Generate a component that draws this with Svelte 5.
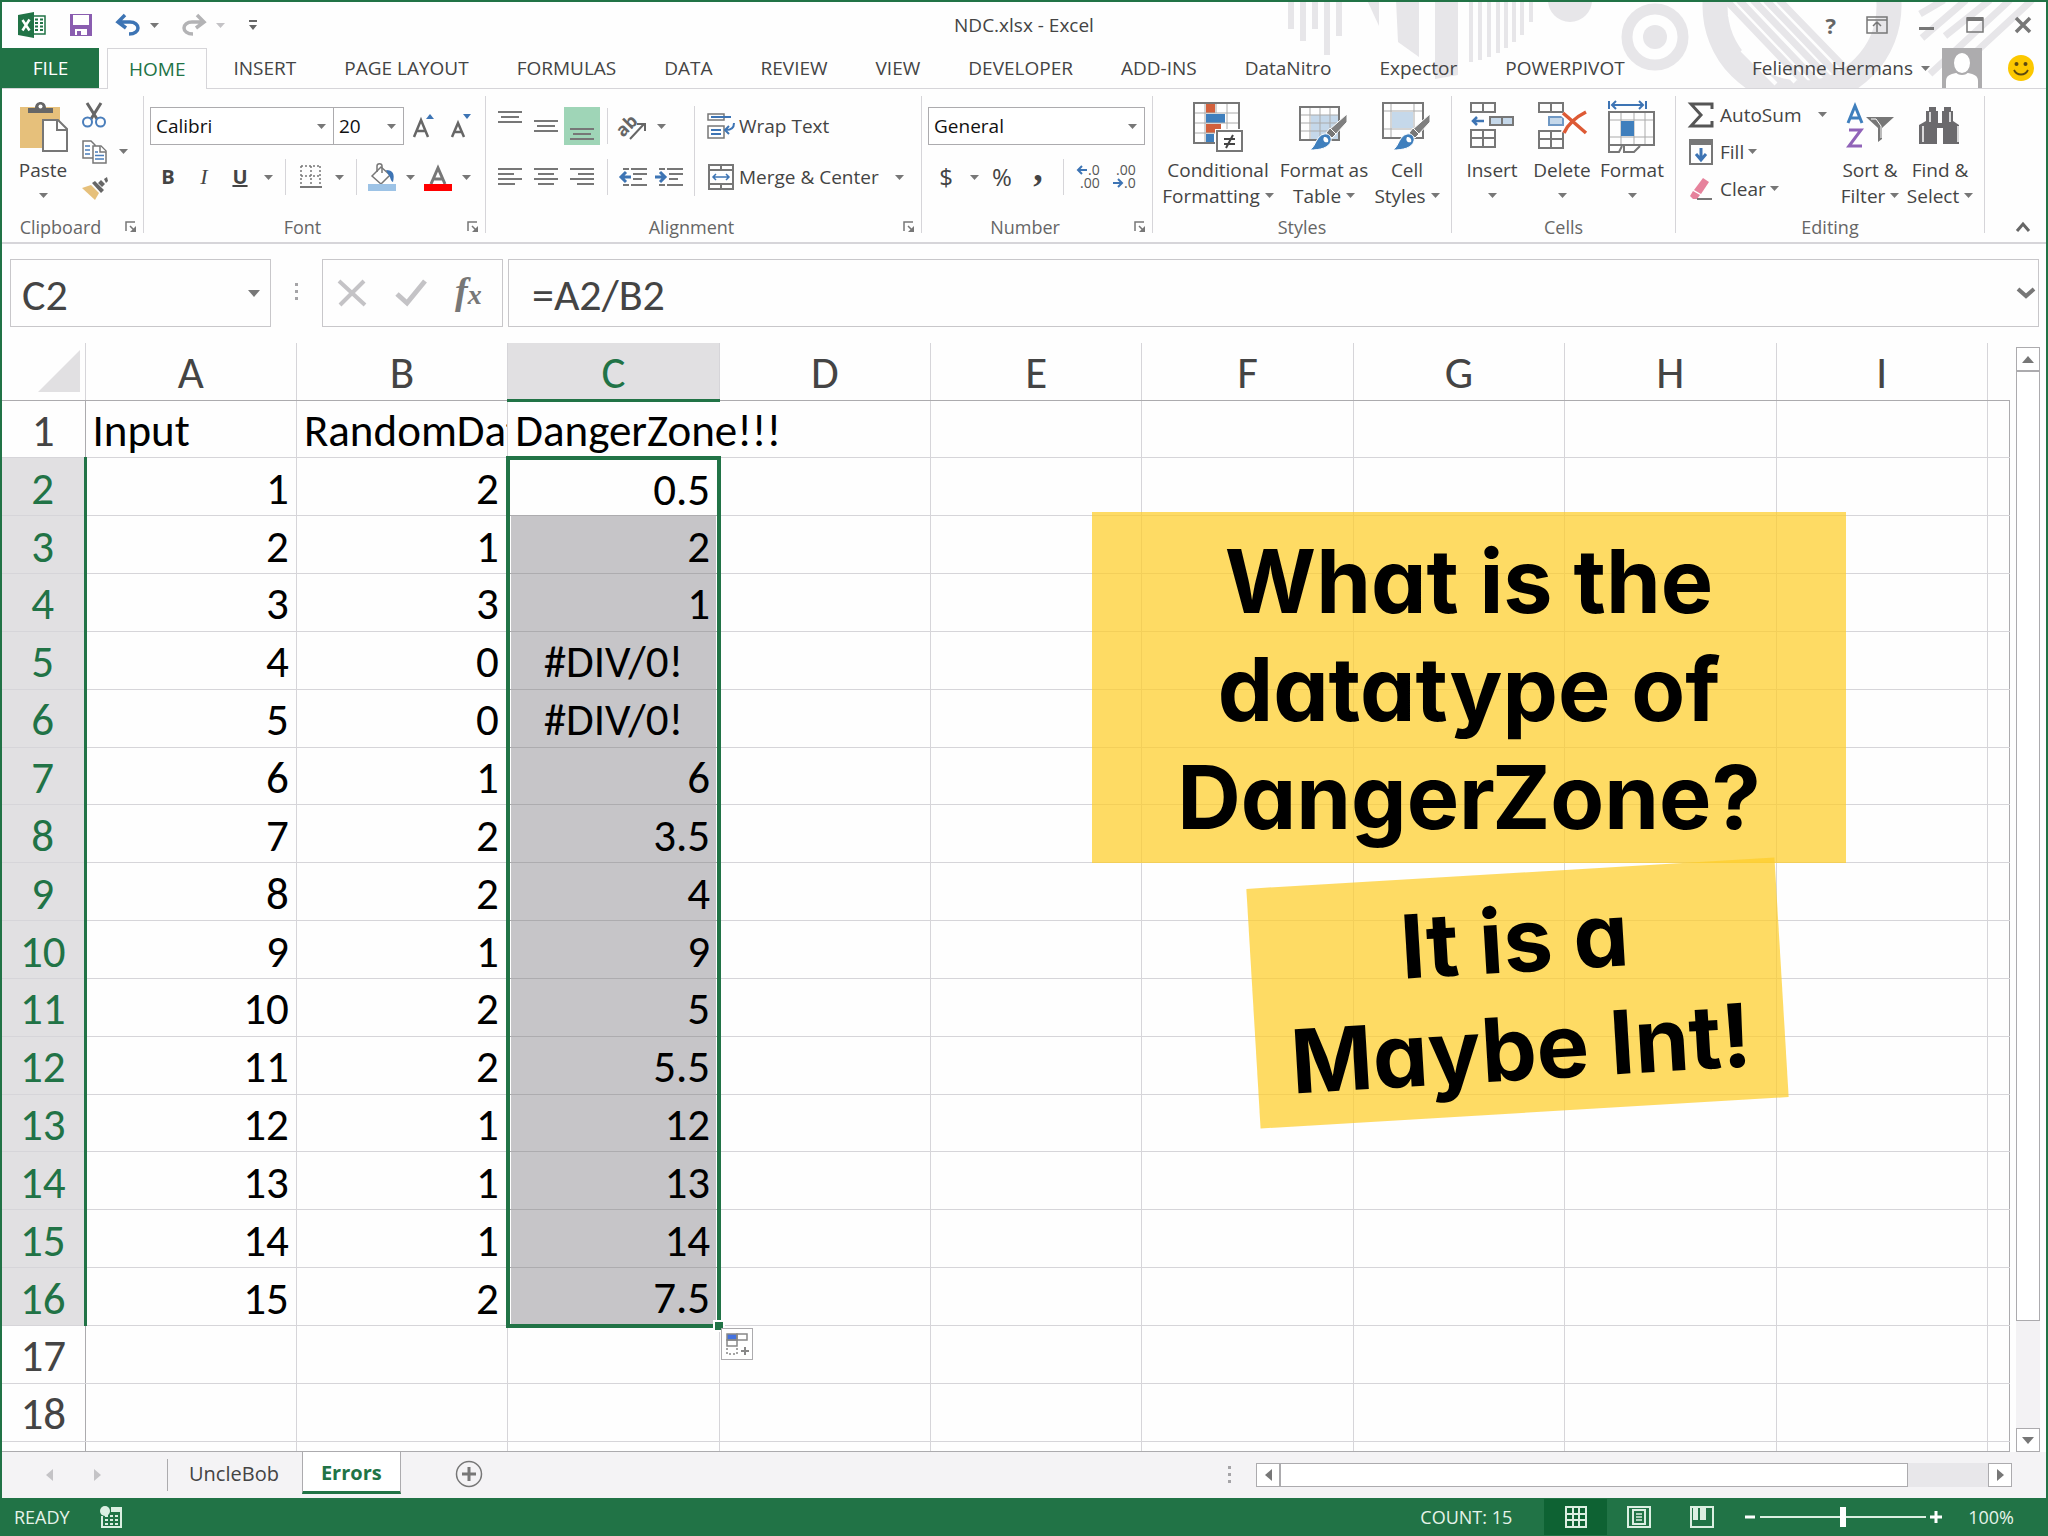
<script>
  const tabs = [
    'HOME', 'INSERT', 'PAGE LAYOUT', 'FORMULAS', 'DATA', 'REVIEW', 'VIEW',
    'DEVELOPER', 'ADD-INS', 'DataNitro', 'Expector', 'POWERPIVOT',
  ];
  const columns = ['A', 'B', 'C', 'D', 'E', 'F', 'G', 'H', 'I'];
  const data = [
    ['Input', 'RandomData', 'DangerZone!!!'],
    [1, 2, 0.5],
    [2, 1, 2],
    [3, 3, 1],
    [4, 0, '#DIV/0!'],
    [5, 0, '#DIV/0!'],
    [6, 1, 6],
    [7, 2, 3.5],
    [8, 2, 4],
    [9, 1, 9],
    [10, 2, 5],
    [11, 2, 5.5],
    [12, 1, 12],
    [13, 1, 13],
    [14, 1, 14],
    [15, 2, 7.5],
    [],
    [],
  ];
  const selection = { column: 2, first: 1, last: 15 };

  let activeTab = $state('HOME');
  let activeSheet = $state('Errors');
  let zoom = $state(50);
  let formula = $state('=A2/B2');

  function inRows(row) {
    return row >= selection.first && row <= selection.last;
  }

  function isSelected(row, column) {
    return column === selection.column && inRows(row);
  }
</script>

{#snippet arrow()}
  <svg class="arrow" width="9" height="5" viewBox="0 0 9 5" aria-hidden="true"><path d="M0 0h9L4.500 5z" fill="currentColor" /></svg>
{/snippet}

{#snippet launcher(label)}
  <button class="launcher" aria-label={label}>
    <svg width="12" height="12" viewBox="0 0 12 12" fill="none" stroke="#777">
      <path d="M1 10V1h9M5 5l5 5" stroke-width="1.500" />
      <path d="M11 5v6H5z" fill="#777" stroke="none" />
    </svg>
  </button>
{/snippet}

{#snippet lines(rows)}
  <svg width="24" height="20" viewBox="0 0 24 20" stroke="#777" stroke-width="2" aria-hidden="true">
    {#each rows as [x1, x2, y]}
      <path d="M{x1} {y}H{x2}" />
    {/each}
  </svg>
{/snippet}

{#snippet brush()}
  <path d="M48 13v8L36 34l-6-5z" fill="#7f7f7f" stroke="#fff" />
  <path d="M31 27l6 6-4 4-6-5z" fill="#777" stroke="#fff" />
  <path d="M25 33c5-1 8 3 7 7-2 7-11 9-21 9 6-4 6-14 14-16z" fill="#3f7fbd" stroke="#fff" />
  <path d="M25 36c3 0 5 2 4 5-3 1-6-1-4-5z" fill="#fff" />
{/snippet}

<div class="window">
  <header class="top">
    <svg class="backdrop" width="768" height="86" viewBox="1280 2 768 86" fill="none" aria-hidden="true">
      <g stroke="#e7e6e9" stroke-width="6">
        <path d="M1293 0v29M1305 0v41M1317 0v29M1329 0v55M1341 0v36" />
      </g>
      <path d="M1369 0h12v26zM1398 0h23v57l-21-15zM1437 0h23v75l-23 4z" fill="#e7e6e9" />
      <g stroke="#e7e6e9" stroke-width="4">
        <path d="M1473 0v62M1482 0v60M1491 0v57M1500 0v53M1508 0v48M1516 0v42M1524 0v35M1533 0v22" />
      </g>
      <circle cx="1572" cy="0" r="22" fill="#e7e6e9" />
      <circle cx="1657" cy="37" r="28" stroke="#e7e6e9" stroke-width="11" />
      <circle cx="1657" cy="37" r="12" fill="#e7e6e9" />
      <circle cx="1804" cy="6" r="87" stroke="#e7e6e9" stroke-width="25" />
      <path d="M1731 14l66 68M1744 50l34 34" stroke="#fefefe" stroke-width="4" />
      <g stroke="#e7e6e9" stroke-width="7">
        <path d="M1728 0l80 84M1741 0l78 82M1755 0l75 78M1768 0l71 74M1781 0l64 66" />
      </g>
      <g stroke="#e7e6e9" stroke-width="7">
        <path d="M1946 0l-24 14M1968 0l-44 38M1992 0l-45 36M2012 0l-80 74M2034 0l-80 74" />
      </g>
    </svg>

    <div class="titlebar">
      <div class="quick">
        <svg width="28" height="26" viewBox="0 0 28 26" aria-hidden="true">
          <path d="M15 4h12v18H15z" fill="#fff" stroke="#217346" stroke-width="1.500" />
          <path d="M17 7.500h3M22 7.500h3M17 11h3M22 11h3M17 14.500h3M22 14.500h3M17 18h3M22 18h3" stroke="#217346" stroke-width="2" />
          <path d="M0 3l16-3v26L0 23z" fill="#217346" />
          <path d="M4.500 8l7 10.500M11.500 7.500L4.500 18.500" stroke="#fff" stroke-width="2.500" />
        </svg>
        <button aria-label="Save">
          <svg width="24" height="24" viewBox="0 0 24 24">
            <path d="M1 1h22v22H1z" fill="#8a5db0" />
            <path d="M4 2h16v10H4zM6 16h12v6H6z" fill="#fff" />
            <path d="M8 18h4v4H8z" fill="#8a5db0" />
          </svg>
        </button>
        <button class="history" aria-label="Undo">
          <svg width="24" height="22" viewBox="0 0 24 22" fill="none" stroke="#3d74b4" stroke-width="3.500">
            <path d="M2 8h12c5 0 8 3 8 6s-3 6-9 6M9 1L2 8l8 6" />
          </svg>
          {@render arrow()}
        </button>
        <button class="history dim" aria-label="Redo">
          <svg width="24" height="22" viewBox="0 0 24 22" fill="none" stroke="#b3b3b5" stroke-width="3.500">
            <path d="M22 8H10c-5 0-8 3-8 6s3 6 9 6M15 1l7 7-8 6" />
          </svg>
          {@render arrow()}
        </button>
        <button aria-label="Customize Quick Access Toolbar">
          <svg width="10" height="12" viewBox="0 0 10 12" fill="#666"><path d="M1 1h8v2H1zM1 6h8l-4 5z" /></svg>
        </button>
      </div>
      <h1>NDC.xlsx - Excel</h1>
      <div class="controls">
        <button aria-label="Help"><b>?</b></button>
        <button aria-label="Ribbon Display Options">
          <svg width="22" height="18" viewBox="0 0 22 18" fill="none" stroke="#777" stroke-width="1.500"><path d="M1 1h20v16H1zM1 4h20M11 16V7M7 10l4-4 4 4" /></svg>
        </button>
        <button aria-label="Minimize">
          <svg width="18" height="18" viewBox="0 0 18 18"><path d="M1 11h15v3H1z" fill="#777" /></svg>
        </button>
        <button aria-label="Maximize">
          <svg width="18" height="18" viewBox="0 0 18 18"><path d="M1 2h16v14H1z" fill="none" stroke="#777" stroke-width="1.500" /><path d="M1 1h16v4H1z" fill="#777" /></svg>
        </button>
        <button aria-label="Close">
          <svg width="18" height="18" viewBox="0 0 18 18"><path d="M2 2l14 14M16 2L2 16" stroke="#777" stroke-width="3.500" /></svg>
        </button>
      </div>
    </div>

    <nav class="tabs">
      <button class="file">FILE</button>
      {#each tabs as tab}
        <button class="tab" class:active={tab === activeTab} onclick={() => (activeTab = tab)}>{tab}</button>
      {/each}
      <div class="account">
        <button class="user">Felienne Hermans {@render arrow()}</button>
        <svg width="40" height="40" viewBox="0 0 40 40" aria-hidden="true">
          <path d="M0 0h40v40H0z" fill="#adacae" />
          <path d="M4 40V33c0-5 4-7 10-8h12c6 1 10 3 10 8v7z" fill="#fff" />
          <ellipse cx="20" cy="15" rx="9" ry="11" fill="#fff" stroke="#adacae" stroke-width="2" />
        </svg>
        <svg width="26" height="26" viewBox="0 0 26 26" aria-hidden="true">
          <circle cx="13" cy="13" r="13" fill="#fcc800" />
          <circle cx="8.500" cy="9" r="2" fill="#5d4a10" />
          <circle cx="17.500" cy="9" r="2" fill="#5d4a10" />
          <path d="M6 15c3 6 11 6 14 0" fill="none" stroke="#5d4a10" stroke-width="1.800" />
        </svg>
      </div>
    </nav>
  </header>

  <div class="ribbon">
    <section class="group clipboard">
      <div class="tools">
        <button class="big">
          <svg width="50" height="52" viewBox="0 0 50 52" aria-hidden="true">
            <path d="M2 6h40v41H2z" fill="#e6c07b" />
            <path d="M10 12V7h7c0-8 11-8 11 0h7v5z" fill="#666" />
            <circle cx="22.500" cy="5.500" r="2" fill="#fff" />
            <path d="M25 19h15l9 9v22H25z" fill="#fff" stroke="#777" stroke-width="2" />
            <path d="M39 19v10h10" fill="none" stroke="#777" stroke-width="2" />
          </svg>
          <span>Paste</span>
          <span>{@render arrow()}</span>
        </button>
        <div class="stack">
          <button aria-label="Cut">
            <svg width="24" height="26" viewBox="0 0 24 26" fill="none">
              <path d="M5 1l10 16M19 1L9 17" stroke="#666" stroke-width="3" />
              <circle cx="5.500" cy="20" r="4.500" stroke="#4a7ebb" stroke-width="2" />
              <circle cx="18.500" cy="20" r="4.500" stroke="#4a7ebb" stroke-width="2" />
            </svg>
          </button>
          <button class="wide" aria-label="Copy">
            <svg width="26" height="24" viewBox="0 0 26 24" fill="#fff" stroke="#777" stroke-width="1.500">
              <path d="M1 1h8l4 4v13H1z" />
              <path d="M11 6h8l5 5v12H11z" />
              <path d="M18 6v6h6" />
              <path d="M3 6h5M3 10h5M3 14h5M13 12h3M13 15.500h9M13 19h9" stroke="#4a7ebb" />
            </svg>
            {@render arrow()}
          </button>
          <button aria-label="Format Painter">
            <svg width="26" height="24" viewBox="0 0 26 24">
              <path d="M0 11l9-3 8 8-4 7z" fill="#e6c07b" />
              <path d="M10 6l3-2 9 9-3 3zM16 6l3-3 4 4-3 3zM22 2l3-2 1 4-2 2z" fill="#666" />
            </svg>
          </button>
        </div>
      </div>
      <footer><span>Clipboard</span>{@render launcher('Clipboard settings')}</footer>
    </section>

    <section class="group font">
      <div class="tools rows">
        <div class="row">
          <label class="select face"><select aria-label="Font"><option>Calibri</option></select>{@render arrow()}</label>
          <label class="select size"><select aria-label="Font size"><option>20</option></select>{@render arrow()}</label>
          <button class="grow" aria-label="Increase Font Size">
            <svg width="26" height="24" viewBox="0 0 26 24"><path d="M2 23L9 6l7 17M4.500 17h9" fill="none" stroke="#666" stroke-width="2.500" /><path d="M14 5l4-5 4 5z" fill="#3d74b4" /></svg>
          </button>
          <button aria-label="Decrease Font Size">
            <svg width="24" height="24" viewBox="0 0 24 24"><path d="M2 23L8 9l6 14M4 18h8" fill="none" stroke="#666" stroke-width="2.500" /><path d="M13 0h8l-4 5z" fill="#3d74b4" /></svg>
          </button>
        </div>
        <div class="row">
          <button class="tool"><b>B</b></button>
          <button class="tool serif"><i>I</i></button>
          <button class="tool"><b><u>U</u></b></button>
          <button class="drop" aria-label="Underline options">{@render arrow()}</button>
          <span class="divider"></span>
          <button class="tool" aria-label="Borders">
            <svg width="24" height="24" viewBox="0 0 24 24" stroke="#777" fill="none">
              <path d="M2 1h20M2 11h20M2 1v20M12 1v20M21 1v20" stroke-width="1.500" stroke-dasharray="2 2" />
              <path d="M1 22h22" stroke-width="2" />
            </svg>
          </button>
          <button class="drop" aria-label="Border options">{@render arrow()}</button>
          <span class="divider"></span>
          <button class="tool" aria-label="Fill Color">
            <svg width="28" height="28" viewBox="0 0 28 28">
              <path d="M4 13L13 4l9 8-9 9z" fill="#fff" stroke="#777" stroke-width="1.500" />
              <path d="M9 9V3c0-3 5-3 5 0v7" fill="none" stroke="#777" stroke-width="1.500" />
              <path d="M18 7c7 0 9 4 7 12-3-1-2-5-5-8z" fill="#3d74b4" />
              <path d="M0 21h28v7H0z" fill="#9dc3e6" />
            </svg>
          </button>
          <button class="drop" aria-label="Fill color options">{@render arrow()}</button>
          <button class="tool" aria-label="Font Color">
            <svg width="28" height="28" viewBox="0 0 28 28"><path d="M7 21l7-16 7 16M9 16h10" fill="none" stroke="#777" stroke-width="3" /><path d="M0 21h28v7H0z" fill="#f00" /></svg>
          </button>
          <button class="drop" aria-label="Font color options">{@render arrow()}</button>
        </div>
      </div>
      <footer><span>Font</span>{@render launcher('Font settings')}</footer>
    </section>

    <section class="group alignment">
      <div class="tools">
        <div class="rows">
          <div class="row">
            <button class="tool high" aria-label="Top Align">{@render lines([[0, 24, 3], [3, 21, 8], [0, 24, 13]])}</button>
            <button class="tool" aria-label="Middle Align">{@render lines([[0, 24, 5], [3, 21, 10], [0, 24, 15]])}</button>
            <button class="tool low pressed" aria-label="Bottom Align">{@render lines([[0, 24, 6], [3, 21, 11], [0, 24, 16]])}</button>
            <span class="divider"></span>
            <button class="tool" aria-label="Orientation">
              <svg width="28" height="28" viewBox="0 0 28 28">
                <text x="-3" y="19" transform="rotate(-45 9 14)" font-family="Open Sans, sans-serif" font-size="18" font-weight="700" fill="#666">ab</text>
                <path d="M11 27L25 12M18 12h8v7" fill="none" stroke="#666" stroke-width="2" />
              </svg>
            </button>
            <button class="drop" aria-label="Orientation options">{@render arrow()}</button>
          </div>
          <div class="row">
            <button class="tool" aria-label="Align Left">{@render lines([[0, 24, 2], [0, 16, 7], [0, 24, 12], [0, 17, 17]])}</button>
            <button class="tool" aria-label="Center">{@render lines([[0, 24, 2], [4, 20, 7], [0, 24, 12], [4, 20, 17]])}</button>
            <button class="tool" aria-label="Align Right">{@render lines([[0, 24, 2], [8, 24, 7], [0, 24, 12], [7, 24, 17]])}</button>
            <span class="divider"></span>
            <button class="tool" aria-label="Decrease Indent">
              <svg width="28" height="20" viewBox="0 0 28 20" fill="none" stroke="#777" stroke-width="2">
                <path d="M4 2h6M12 2h16M14 7h14M14 12h9M4 18h6M12 18h16" />
                <path d="M2 10h10M7 5l-5 5 5 5" stroke="#3d74b4" stroke-width="3" />
              </svg>
            </button>
            <button class="tool" aria-label="Increase Indent">
              <svg width="28" height="20" viewBox="0 0 28 20" fill="none" stroke="#777" stroke-width="2">
                <path d="M4 2h6M12 2h16M14 7h14M14 12h9M4 18h6M12 18h16" />
                <path d="M0 10h10M5 5l5 5-5 5" stroke="#3d74b4" stroke-width="3" />
              </svg>
            </button>
          </div>
        </div>
        <span class="divider tall"></span>
        <div class="rows">
          <button class="text">
            <svg width="28" height="28" viewBox="0 0 28 28" fill="none" stroke="#777" stroke-width="1.500" aria-hidden="true">
              <path d="M1 2h16v6H1zM1 14h16v12H1z" />
              <path d="M4 5h20M4 18h10M4 22h10M27 11c0 5-3 7-8 7M22 14l-4 4 4 4" stroke="#3d74b4" stroke-width="2" />
            </svg>
            Wrap Text
          </button>
          <button class="text">
            <svg width="28" height="28" viewBox="0 0 28 28" fill="none" stroke="#777" stroke-width="2" aria-hidden="true">
              <path d="M2 2h24v24H2zM2 7h24M2 21h24M14 2v5M14 21v5" />
              <path d="M6 14h16M9 11l-3 3 3 3M19 11l3 3-3 3" stroke="#3d74b4" stroke-width="1.500" />
            </svg>
            Merge &amp; Center <span class="far">{@render arrow()}</span>
          </button>
        </div>
      </div>
      <footer><span>Alignment</span>{@render launcher('Alignment settings')}</footer>
    </section>

    <section class="group number">
      <div class="tools rows">
        <div class="row">
          <label class="select format"><select aria-label="Number format"><option>General</option></select>{@render arrow()}</label>
        </div>
        <div class="row">
          <button class="tool symbol">$</button>
          <button class="drop" aria-label="Accounting options">{@render arrow()}</button>
          <button class="tool symbol">%</button>
          <button class="tool comma" aria-label="Comma Style"><b>,</b></button>
          <span class="divider"></span>
          <button class="tool" aria-label="Increase Decimal">
            <svg width="26" height="26" viewBox="0 0 26 26" font-family="Open Sans, sans-serif" font-size="14" fill="#555">
              <text x="12" y="11">.0</text><text x="4" y="24">.00</text>
              <path d="M2 6h9M6 2L2 6l4 4" fill="none" stroke="#3d74b4" stroke-width="2" />
            </svg>
          </button>
          <button class="tool" aria-label="Decrease Decimal">
            <svg width="26" height="26" viewBox="0 0 26 26" font-family="Open Sans, sans-serif" font-size="14" fill="#555">
              <text x="4" y="11">.00</text><text x="12" y="24">.0</text>
              <path d="M1 19h9M6 15l4 4-4 4" fill="none" stroke="#3d74b4" stroke-width="2" />
            </svg>
          </button>
        </div>
      </div>
      <footer><span>Number</span>{@render launcher('Number settings')}</footer>
    </section>

    <section class="group styles">
      <div class="tools">
        <button class="big">
          <svg width="50" height="52" viewBox="0 0 50 52" fill="none" aria-hidden="true">
            <path d="M1 2h45v40H1z" fill="#fff" />
            <path d="M13 2h9v10h-9zM13 23h15v9H13z" fill="#d2603c" />
            <path d="M13 13h19v9H13zM13 33h8v9h-8z" fill="#3f7fbd" />
            <path d="M12 2v40M23 2v10M34 2v40M1 12h45M1 22h45M1 32h45" stroke="#aaa" />
            <path d="M1 2h45v40H1z" stroke="#777" stroke-width="2" />
            <path d="M24 30h25v20H24z" fill="#fff" stroke="#fff" stroke-width="4" />
            <path d="M24 30h25v20H24z" fill="#fff" stroke="#777" stroke-width="2" />
            <path d="M31 38h11M31 43h11M40 34l-7 13" stroke="#444" stroke-width="2" />
          </svg>
          <span>Conditional</span>
          <span>Formatting {@render arrow()}</span>
        </button>
        <button class="big">
          <svg width="50" height="52" viewBox="0 0 50 52" fill="none" aria-hidden="true">
            <path d="M12 14h28v25H12z" fill="#c5d8ea" />
            <path d="M11 6v33M21 6v33M31 6v33M1 14h39M1 22h39M1 30h39" stroke="#aaa" />
            <path d="M1 6h39v33H1z" stroke="#777" stroke-width="2" />
            {@render brush()}
          </svg>
          <span>Format as</span>
          <span>Table {@render arrow()}</span>
        </button>
        <button class="big">
          <svg width="50" height="52" viewBox="0 0 50 52" fill="none" aria-hidden="true">
            <path d="M10 11h21v16H10z" fill="#c5d8ea" />
            <path d="M9 2v35M32 2v35M1 10h40M1 28h40" stroke="#aaa" />
            <path d="M1 2h40v35H1z" stroke="#777" stroke-width="2" />
            {@render brush()}
          </svg>
          <span>Cell</span>
          <span>Styles {@render arrow()}</span>
        </button>
      </div>
      <footer><span>Styles</span></footer>
    </section>

    <section class="group cells">
      <div class="tools">
        <button class="big">
          <svg width="50" height="52" viewBox="0 0 50 52" fill="none" stroke="#777" stroke-width="2" aria-hidden="true">
            <path d="M4 2h24v9H4zM16 2v9M4 29h24v17H4zM16 29v17M4 37h24" />
            <path d="M23 16h23v8H23zM35 16v8" fill="#c5d8ea" />
            <path d="M6 20h11M10 16l-4 4 4 4" stroke="#3d74b4" stroke-width="2.500" />
          </svg>
          <span>Insert</span>
          <span>{@render arrow()}</span>
        </button>
        <button class="big">
          <svg width="50" height="52" viewBox="0 0 50 52" fill="none" stroke="#777" stroke-width="2" aria-hidden="true">
            <path d="M2 2h24v9H2zM14 2v9M2 30h24v17H2zM14 30v17M2 38h24" />
            <path d="M12 16h14v8H12z" fill="#c5d8ea" stroke="#6f98c4" />
            <path d="M26 12l23 20M49 11C39 16 31 23 27 32" stroke="#fff" stroke-width="7" />
            <path d="M26 12l23 20M49 11C39 16 31 23 27 32" stroke="#dd5a35" stroke-width="3.500" />
          </svg>
          <span>Delete</span>
          <span>{@render arrow()}</span>
        </button>
        <button class="big">
          <svg width="50" height="52" viewBox="0 0 50 52" fill="none" aria-hidden="true">
            <path d="M2 0v8M39 0v8M5 4h31M9 0L5 4l4 4M32 0l4 4-4 4" stroke="#3d74b4" stroke-width="2" />
            <path d="M14 11v34M27 11v34M38 11v34M2 19h45M2 36h45" stroke="#aaa" />
            <path d="M14 20h13v15H14z" fill="#3f7fbd" />
            <path d="M2 11h45v33H2zM2 44v7h10l3-6M17 45v6h10l6-6" stroke="#777" stroke-width="2" />
          </svg>
          <span>Format</span>
          <span>{@render arrow()}</span>
        </button>
      </div>
      <footer><span>Cells</span></footer>
    </section>

    <section class="group editing">
      <div class="tools">
        <div class="stack">
          <button class="text">
            <svg width="26" height="26" viewBox="0 0 26 26" aria-hidden="true"><path d="M24 7V2H3l10 11L3 24h21v-5" fill="none" stroke="#555" stroke-width="3" /></svg>
            AutoSum <span class="far">{@render arrow()}</span>
          </button>
          <button class="text">
            <svg width="26" height="26" viewBox="0 0 26 26" fill="none" aria-hidden="true">
              <path d="M2 1h22v24H2z" stroke="#777" stroke-width="2" />
              <path d="M2 1h22v5H2z" fill="#777" />
              <path d="M13 9v12M8 15l5 6 5-6" stroke="#3d74b4" stroke-width="3" />
            </svg>
            Fill {@render arrow()}
          </button>
          <button class="text">
            <svg width="26" height="26" viewBox="0 0 26 26" aria-hidden="true">
              <path d="M15 2l6 4-8 12-7-4z" fill="#e6829c" />
              <path d="M5 15l7 4-3 4H5l-3-3z" fill="#e6829c" />
              <path d="M9 23h15" stroke="#777" stroke-width="2" />
            </svg>
            Clear {@render arrow()}
          </button>
        </div>
        <button class="big">
          <svg width="50" height="52" viewBox="0 0 50 52" fill="none" aria-hidden="true">
            <path d="M3 22L10 5l7 17M5 17h10" stroke="#3f7fbd" stroke-width="3" />
            <path d="M4 29h12L4 45h13" stroke="#9063b8" stroke-width="3" />
            <path d="M21 16h28L37 27v11l-4 3V27z" fill="#777" />
            <path d="M26 18h5l5 7v12" stroke="#fff" />
          </svg>
          <span>Sort &amp;</span>
          <span>Filter {@render arrow()}</span>
        </button>
        <button class="big">
          <svg width="50" height="52" viewBox="0 0 50 52" fill="#6b6a6d" aria-hidden="true">
            <path d="M14 6h7v4h2v12h4V10h2V6h7v4h2v10l6 4v19H28V27h-6v16H4V24l7-4V10h3z" />
            <path d="M15 11v10M8 25v16M35 11v10M43 25v16" stroke="#fff" stroke-width="1.500" />
            <path d="M23 20h4" stroke="#fff" />
          </svg>
          <span>Find &amp;</span>
          <span>Select {@render arrow()}</span>
        </button>
      </div>
      <footer><span>Editing</span></footer>
    </section>

    <button class="collapse" aria-label="Collapse the Ribbon">
      <svg width="16" height="12" viewBox="0 0 16 12"><path d="M2 10l6-7 6 7" fill="none" stroke="#666" stroke-width="3" /></svg>
    </button>
  </div>

  <div class="formula-bar">
    <div class="box name">
      <input value="C2" aria-label="Name Box" />
      <button aria-label="Name list"><svg width="12" height="7" viewBox="0 0 12 7"><path d="M0 0h12L6 7z" fill="#777" /></svg></button>
    </div>
    <span class="dots"></span>
    <div class="box entry">
      <button aria-label="Cancel"><svg width="30" height="28" viewBox="0 0 30 28"><path d="M2 2l26 24M27 2L3 26" stroke="#c4c3c6" stroke-width="4" /></svg></button>
      <button aria-label="Enter"><svg width="32" height="28" viewBox="0 0 32 28"><path d="M2 15l10 9L30 2" fill="none" stroke="#c4c3c6" stroke-width="5" /></svg></button>
      <button class="fx" aria-label="Insert Function"><i>f<small>x</small></i></button>
    </div>
    <div class="box formula">
      <input bind:value={formula} aria-label="Formula Bar" />
      <button aria-label="Expand Formula Bar"><svg width="20" height="14" viewBox="0 0 20 14"><path d="M2 3l8 7 8-7" fill="none" stroke="#777" stroke-width="4" /></svg></button>
    </div>
  </div>

  <main class="workspace">
    <div class="sheet">
      <table>
        <colgroup>
          <col class="index" />
          {#each columns as column (column)}<col />{/each}
          <col class="rest" />
        </colgroup>
        <thead>
          <tr>
            <th class="corner"><svg width="42" height="42" viewBox="0 0 42 42" aria-hidden="true"><path d="M42 0v42H0z" fill="#e1e0e2" /></svg></th>
            {#each columns as column, c}
              <th scope="col" class:picked={c === selection.column}>{column}</th>
            {/each}
            <th></th>
          </tr>
        </thead>
        <tbody>
          {#each data as row, r}
            <tr>
              <th scope="row" class:picked={inRows(r)}>{r + 1}</th>
              {#each columns as column, c}
                <td
                  class:value={typeof row[c] === 'number'}
                  class:error={typeof row[c] === 'string' && row[c].startsWith('#')}
                  class:spill={r === 0 && c === selection.column}
                  class:selected={isSelected(r, c)}
                  class:first={isSelected(r, c) && r === selection.first}
                  class:last={isSelected(r, c) && r === selection.last}
                >
                  {row[c] ?? ''}
                  {#if isSelected(r, c) && r === selection.last}
                    <span class="handle"></span>
                    <button class="autofill" aria-label="Auto Fill Options">
                      <svg width="26" height="26" viewBox="0 0 26 26" fill="none" stroke="#888" stroke-width="1.500">
                        <path d="M3 3h10v6H3z" fill="#4472e0" />
                        <path d="M13 3h10v6H13zM3 9h10v6H3z" />
                        <path d="M3 17v6h10v-6" stroke-dasharray="2 2" />
                        <path d="M17 20h8M21 16v8" stroke-width="2" />
                      </svg>
                    </button>
                  {/if}
                </td>
              {/each}
              <td></td>
            </tr>
          {/each}
          <tr class="cut">
            <th></th>
            {#each columns as column (column)}<td></td>{/each}
            <td></td>
          </tr>
        </tbody>
      </table>

      <div class="note question">What is the<br />datatype of<br />DangerZone?</div>
      <div class="note answer">It is a<br />Maybe Int!</div>
    </div>

    <div class="vscroll">
      <button aria-label="Scroll up"><svg width="12" height="7" viewBox="0 0 12 7"><path d="M0 7h12L6 0z" fill="#777" /></svg></button>
      <div class="thumb"></div>
      <button class="end" aria-label="Scroll down"><svg width="12" height="7" viewBox="0 0 12 7"><path d="M0 0h12L6 7z" fill="#777" /></svg></button>
    </div>
  </main>

  <div class="sheets">
    <div class="pager">
      <button aria-label="Previous sheet"><svg width="7" height="12" viewBox="0 0 7 12"><path d="M7 0v12L0 6z" fill="#c4c3c6" /></svg></button>
      <button aria-label="Next sheet"><svg width="7" height="12" viewBox="0 0 7 12"><path d="M0 0v12l7-6z" fill="#c4c3c6" /></svg></button>
    </div>
    {#each ['UncleBob', 'Errors'] as name}
      <button class="sheet-tab" class:active={name === activeSheet} onclick={() => (activeSheet = name)}>{name}</button>
    {/each}
    <button class="add" aria-label="New sheet">
      <svg width="28" height="28" viewBox="0 0 28 28" fill="none" stroke="#777"><circle cx="14" cy="14" r="12.500" stroke-width="1.500" /><path d="M7 14h14M14 7v14" stroke-width="3" /></svg>
    </button>
    <span class="dots"></span>
    <div class="hscroll">
      <button aria-label="Scroll left"><svg width="7" height="12" viewBox="0 0 7 12"><path d="M7 0v12L0 6z" fill="#777" /></svg></button>
      <div class="thumb"></div>
      <button class="end" aria-label="Scroll right"><svg width="7" height="12" viewBox="0 0 7 12"><path d="M0 0v12l7-6z" fill="#777" /></svg></button>
    </div>
  </div>

  <footer class="status">
    <span>READY</span>
    <svg class="macro" width="22" height="22" viewBox="0 0 22 22" fill="none" stroke="#dcefe2" aria-hidden="true">
      <path d="M2 10v11h19V2H11" stroke-width="2" />
      <path d="M11 3h11v3H11z" fill="#dcefe2" stroke="none" />
      <path d="M5 10h3M10 10h3M15 10h3M5 14h3M10 14h3M15 14h3M5 18h3M10 18h3M15 18h3" stroke-width="2" />
      <circle cx="5" cy="5" r="5" fill="#dcefe2" stroke="none" />
    </svg>
    <span class="count">COUNT: 15</span>
    <div class="views">
      <button class="on" aria-label="Normal">
        <svg width="24" height="24" viewBox="0 0 24 24" fill="none" stroke="#dcefe2" stroke-width="2"><path d="M2 2h20v20H2zM2 9h20M2 15h20M9 2v20M15 2v20" /></svg>
      </button>
      <button aria-label="Page Layout">
        <svg width="24" height="24" viewBox="0 0 24 24" fill="none" stroke="#dcefe2" stroke-width="2"><path d="M1 2h22v20H1zM6 5h12v14H6z" /><path d="M9 9h6M9 12h6M9 15h6" stroke-width="1.500" /></svg>
      </button>
      <button aria-label="Page Break Preview">
        <svg width="24" height="24" viewBox="0 0 24 24" fill="none" stroke="#dcefe2" stroke-width="2"><path d="M1 2h22v20H1z" /><path d="M3 3h5v12H3zM10 3h6v12h-6z" fill="#dcefe2" stroke="none" /></svg>
      </button>
    </div>
    <div class="zoom">
      <button aria-label="Zoom out"><svg width="14" height="14" viewBox="0 0 14 14"><path d="M2 7h10" stroke="#fff" stroke-width="3" /></svg></button>
      <input type="range" min="0" max="100" bind:value={zoom} aria-label="Zoom" />
      <button aria-label="Zoom in"><svg width="14" height="14" viewBox="0 0 14 14"><path d="M1 7h12M7 1v12" stroke="#fff" stroke-width="3" /></svg></button>
      <span>100%</span>
    </div>
  </footer>
</div>

<style>
  :global(body) {
    margin: 0;
  }

  .window {
    --green: #217346;
    --line: #d6d5d9;
    --edge: #acabae;
    --shade: #e1e0e2;
    box-sizing: border-box;
    display: flex;
    flex-direction: column;
    height: 100vh;
    border: solid var(--green);
    border-width: 2px 2px 0;
    background: #fefefe;
    color: #444;
    font: 19px/26px 'Segoe UI', 'Open Sans', sans-serif;
    overflow: hidden;
  }

  .window *,
  .window *::before {
    box-sizing: border-box;
  }

  button,
  input,
  select {
    margin: 0;
    padding: 0;
    border: 0;
    background: none;
    color: inherit;
    font: inherit;
  }

  button {
    display: flex;
    align-items: center;
    justify-content: center;
    white-space: nowrap;
  }

  svg {
    flex: none;
    display: block;
  }

  button svg {
    overflow: visible;
  }

  .arrow {
    display: inline-block;
    color: #777;
    vertical-align: middle;
  }

  /* title and tabs */

  .top {
    position: relative;
  }

  .backdrop {
    position: absolute;
    top: 0;
    right: 0;
  }

  .titlebar {
    position: relative;
    display: grid;
    grid-template-columns: 1fr auto 1fr;
    align-items: center;
    height: 46px;
    padding: 0 14px;
  }

  .titlebar h1 {
    margin: 0;
    font-size: 19px;
    font-weight: 400;
  }

  .quick {
    display: flex;
    align-items: center;
    gap: 23px;
    padding-left: 2px;
  }

  .history {
    gap: 10px;
  }

  .dim .arrow {
    color: #c4c3c6;
  }

  .controls {
    display: flex;
    justify-content: flex-end;
    gap: 30px;
    color: #666;
    font-size: 22px;
  }

  .tabs {
    position: relative;
    display: flex;
    height: 41px;
    border-bottom: 1px solid var(--line);
  }

  .file {
    width: 97px;
    margin-right: 8px;
    background: var(--green);
    color: #fff;
  }

  .tab {
    padding: 0 24px;
  }

  .tab.active {
    height: 41px;
    margin-right: 2px;
    padding: 0 21px;
    border: solid var(--line);
    border-width: 1px 1px 0;
    background: #fefefe;
    color: var(--green);
  }

  .account {
    display: flex;
    flex: 1;
    align-items: center;
    justify-content: flex-end;
    padding-right: 12px;
  }

  .user {
    gap: 8px;
    margin-right: 12px;
  }

  .account svg + svg {
    margin-left: 26px;
  }

  /* ribbon */

  .ribbon {
    display: flex;
    padding: 7px 0 9px;
    border-bottom: 2px solid var(--line);
  }

  .group {
    display: flex;
    flex: none;
    flex-direction: column;
    height: 137px;
    border-right: 1px solid var(--line);
  }

  .clipboard { width: 142px; }
  .font { width: 342px; }
  .alignment { width: 436px; }
  .number { width: 231px; }
  .styles { width: 299px; }
  .cells { width: 224px; }
  .editing { width: 309px; }

  .tools {
    display: flex;
    flex: 1;
    padding: 0 6px;
  }

  .group footer {
    display: flex;
    align-items: center;
    height: 12px;
    color: #666;
    font-size: 18px;
    line-height: 12px;
  }

  .group footer span {
    flex: 1;
    text-align: center;
  }

  .launcher {
    width: 24px;
  }

  .rows {
    display: flex;
    flex-direction: column;
    gap: 13px;
    padding-top: 11px;
  }

  .row {
    display: flex;
    align-items: center;
    height: 38px;
  }

  .tool {
    flex: none;
    width: 36px;
    height: 38px;
  }

  .tool b {
    font-size: 20px;
  }

  .serif {
    font: 22px 'Liberation Serif', serif;
  }

  .high {
    align-items: flex-start;
    padding-top: 2px;
  }

  .low {
    align-items: flex-end;
    padding-bottom: 2px;
  }

  .pressed {
    background: #9fd5b7;
  }

  .drop {
    width: 20px;
    height: 38px;
  }

  .divider {
    width: 1px;
    height: 36px;
    margin: 0 7px;
    background: var(--line);
  }

  .divider.tall {
    height: 90px;
    margin: 10px 12px 0 7px;
  }

  .select {
    display: grid;
    grid-template-columns: 1fr 24px;
    align-items: center;
    height: 38px;
    border: 1px solid var(--edge);
    background: #fff;
    color: #111;
  }

  .select select {
    grid-area: 1 / 1 / 2 / 3;
    height: 36px;
    padding-left: 5px;
    appearance: none;
  }

  .select .arrow {
    grid-area: 1 / 2;
    justify-self: center;
    pointer-events: none;
  }

  .face { width: 184px; }
  .size { width: 71px; margin-left: -1px; }
  .format { width: 217px; }

  .grow {
    margin: 0 12px 0 8px;
  }

  .text {
    justify-content: flex-start;
    gap: 4px;
    height: 38px;
  }

  .far {
    display: flex;
    margin-left: 12px;
  }

  .symbol {
    font-size: 24px;
  }

  .comma {
    align-items: flex-start;
    font-family: 'Liberation Serif', serif;
  }

  .comma b {
    font-size: 38px;
    line-height: 20px;
  }

  .big {
    flex-direction: column;
    justify-content: flex-start;
    width: 70px;
    padding-top: 5px;
  }

  .big svg:first-child {
    margin-bottom: 4px;
  }

  .big span {
    height: 26px;
  }

  .styles .big { width: 72px; }
  .styles .big:nth-child(1) { width: 118px; }
  .styles .big:nth-child(2) { width: 94px; }

  .clipboard .tools {
    gap: 4px;
    padding: 0 2px 0 6px;
  }

  .clipboard .stack button {
    justify-content: flex-start;
    height: 37px;
  }

  .clipboard .wide {
    gap: 11px;
  }

  .cells .tools {
    padding-left: 5px;
  }

  .editing .tools {
    padding-left: 12px;
  }

  .editing .stack {
    width: 147px;
  }

  .stack .text {
    height: 37px;
  }

  .stack .text svg:first-child {
    margin-right: 2px;
  }

  .collapse {
    flex: 1;
    align-items: flex-end;
    padding-left: 14px;
  }

  /* formula bar */

  .formula-bar {
    display: flex;
    padding: 15px 7px 0 8px;
    font: 44px/44px Calibri, Carlito, Lato, sans-serif;
  }

  .box {
    display: flex;
    height: 68px;
    border: 1px solid #c8c7ca;
  }

  .box input {
    flex: 1;
    min-width: 0;
    padding-top: 4px;
    outline: 0;
  }

  .name {
    width: 261px;
    padding: 0 10px 0 11px;
  }

  .dots {
    width: 3px;
    height: 18px;
    margin: 24px;
    background: repeating-linear-gradient(#a5a4a7 0 3px, transparent 3px 7px);
  }

  .entry {
    gap: 28px;
    width: 181px;
    padding-left: 14px;
  }

  .fx {
    color: #777;
    font: 700 38px/44px 'Liberation Serif', serif;
  }

  .fx small {
    font-size: 28px;
  }

  .formula {
    flex: 1;
    margin-left: 5px;
    padding: 0 2px 0 23px;
  }

  /* grid */

  .workspace {
    display: flex;
    flex: 1;
    gap: 6px;
    min-height: 0;
    padding: 16px 6px 0 0;
  }

  .sheet {
    position: relative;
    flex: 1;
    min-width: 0;
  }

  table {
    width: 100%;
    height: 100%;
    border-collapse: collapse;
    table-layout: fixed;
    color: #000;
    font: 45px/44px Calibri, Carlito, Lato, sans-serif;
  }

  .index { width: 83px; }
  .rest { width: 22px; }

  tr {
    height: 57px;
  }

  .cut {
    height: 10px;
  }

  th,
  td {
    padding: 4px 7px 0;
    border: 1px solid var(--line);
    font-weight: 400;
    white-space: nowrap;
  }

  th {
    padding: 4px 0 0;
    border-left: 0;
    color: #444;
  }

  .cut th,
  .cut td {
    padding: 0;
    border-bottom-color: var(--edge);
  }

  thead th {
    border-top: 0;
    border-bottom-color: var(--edge);
  }

  thead th:last-child {
    border-right: 0;
  }

  tbody th {
    border-right-color: var(--edge);
  }

  td {
    overflow: hidden;
  }

  td:last-child {
    border-right-color: var(--edge);
  }

  .corner svg {
    margin: 0 0 0 auto;
    padding: 0 5px 5px 0;
    width: 47px;
    height: 47px;
  }

  th.picked {
    background: var(--shade);
    color: var(--green);
  }

  thead .picked {
    border-bottom: 3px solid var(--green);
  }

  tbody .picked {
    border-right: 3px solid var(--green);
  }

  .value {
    text-align: right;
  }

  .error {
    text-align: center;
  }

  .spill {
    border-right: 0;
    overflow: visible;
  }

  .spill + td {
    border-left: 0;
  }

  .selected {
    border: solid var(--green);
    border-width: 0 4px;
    border-bottom: 1px solid #adacaf;
    background: linear-gradient(to right, #fff 1px, #c6c5c8 1px calc(100% - 1px), #fff calc(100% - 1px));
  }

  .selected.first {
    border-top: 4px solid var(--green);
    background: none;
  }

  .selected.last {
    position: relative;
    border-bottom: 4px solid var(--green);
    overflow: visible;
  }

  .handle {
    position: absolute;
    right: -8px;
    bottom: -8px;
    width: 12px;
    height: 12px;
    border: 2px solid #fff;
    background: var(--green);
  }

  .autofill {
    position: absolute;
    top: calc(100% + 4px);
    left: calc(100% + 4px);
    width: 32px;
    height: 32px;
    border: 1px solid var(--edge);
    background: #fff;
  }

  .note {
    position: absolute;
    background: rgba(253, 205, 40, 0.72);
    color: #000;
    font: 700 88px/108px 'Century Gothic', Inter, sans-serif;
    font-feature-settings: 'cv11';
    text-align: center;
    white-space: nowrap;
  }

  .question {
    top: 169px;
    left: 1090px;
    width: 754px;
    height: 351px;
    padding-top: 15px;
  }

  .answer {
    top: 530px;
    left: 1251px;
    width: 529px;
    height: 240px;
    padding-top: 13px;
    rotate: -3.4deg;
  }

  /* scroll bars */

  .vscroll {
    display: flex;
    flex-direction: column;
    width: 24px;
    margin-top: 4px;
    background: #f3f2f4;
  }

  .vscroll button,
  .hscroll button {
    flex: none;
    width: 24px;
    height: 24px;
    border: 1px solid var(--edge);
    background: #fff;
  }

  .thumb {
    border: 1px solid var(--edge);
    background: #fff;
  }

  .vscroll .thumb {
    height: 86%;
  }

  .end {
    margin: auto 0 0 auto;
  }

  .sheets {
    display: flex;
    align-items: flex-start;
    height: 46px;
    padding-right: 34px;
    background: #f4f3f5;
    font-size: 20px;
  }

  .pager {
    display: flex;
    align-items: center;
    gap: 41px;
    width: 166px;
    height: 32px;
    margin-top: 7px;
    padding-left: 44px;
    border-right: 1px solid var(--edge);
  }

  .sheet-tab {
    height: 43px;
    padding: 0 23px 0 21px;
  }

  .sheet-tab.active {
    height: 42px;
    padding: 2px 18px 0;
    border: solid var(--edge);
    border-width: 0 1px;
    border-bottom: 3px solid var(--green);
    background: #fff;
    color: var(--green);
    font-weight: 700;
  }

  .add {
    height: 44px;
    margin-left: 54px;
  }

  .sheets .dots {
    margin: 14px 25px 0 auto;
  }

  .hscroll {
    display: flex;
    width: calc(37% + 12px);
    margin-top: 11px;
    background: #e8e7ea;
  }

  .hscroll .thumb {
    width: 83%;
  }

  /* status bar */

  .status {
    display: flex;
    flex: none;
    align-items: center;
    height: 38px;
    padding: 0 32px 0 12px;
    background: var(--green);
    color: #e6f3ea;
    font-size: 18px;
  }

  .macro {
    margin-left: 30px;
  }

  .count {
    margin-left: auto;
  }

  .views {
    display: flex;
    margin: 0 10px 0 32px;
  }

  .views button {
    width: 63px;
    height: 36px;
  }

  .views .on {
    background: #0e6233;
  }

  .zoom {
    display: flex;
    align-items: center;
    gap: 3px;
  }

  .zoom input {
    width: 166px;
    height: 20px;
    appearance: none;
    background: linear-gradient(#dcefe2, #dcefe2) center / 100% 2px no-repeat;
  }

  .zoom input::-webkit-slider-thumb {
    width: 6px;
    height: 20px;
    appearance: none;
    background: #fff;
  }

  .zoom span {
    margin-left: 22px;
  }
</style>
